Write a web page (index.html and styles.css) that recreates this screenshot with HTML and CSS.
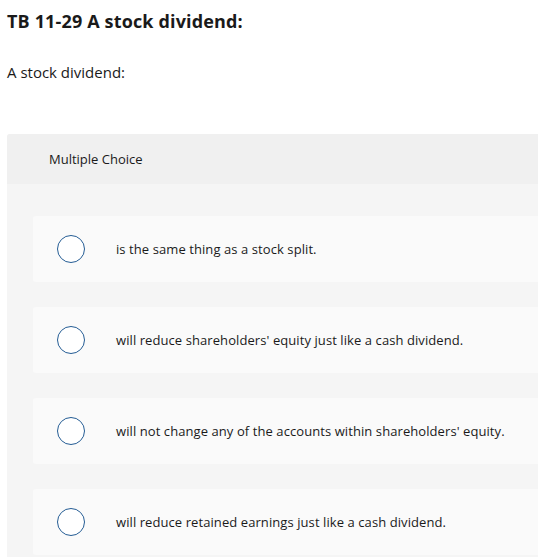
FILE: index.html
```html
<!DOCTYPE html>
<html>
<head>
<meta charset="utf-8">
<link rel="stylesheet" href="styles.css">
</head>
<body>
<div class="page">
  <h1 class="title">TB 11-29 A stock dividend:</h1>
  <p class="prompt">A stock dividend:</p>
  <div class="panel">
    <div class="panel-head">Multiple Choice</div>
    <div class="panel-body">
      <div class="option"><span class="radio"></span><span class="opt-text">is the same thing as a stock split.</span></div>
      <div class="option"><span class="radio"></span><span class="opt-text">will reduce shareholders' equity just like a cash dividend.</span></div>
      <div class="option"><span class="radio"></span><span class="opt-text">will not change any of the accounts within shareholders' equity.</span></div>
      <div class="option"><span class="radio"></span><span class="opt-text">will reduce retained earnings just like a cash dividend.</span></div>
    </div>
  </div>
</div>
</body>
</html>
```
FILE: styles.css
```css
html, body {
  margin: 0;
  padding: 0;
  background: #ffffff;
}
body {
  font-family: "Open Sans", "Noto Sans", sans-serif;
  color: #1a1a1a;
}
.page {
  padding-left: 7px;
}
.title {
  margin: 0;
  padding-top: 8px;
  font-size: 18px;
  line-height: 26px;
  font-weight: 700;
  letter-spacing: 0.15px;
  color: #1a1a1a;
}
.prompt {
  margin: 0;
  padding-top: 28px;
  font-size: 15px;
  line-height: 20px;
  color: #1a1a1a;
}
.panel {
  margin-top: 52px;
  border-radius: 3px 0 0 0;
  background: #f5f5f5;
}
.panel-head {
  height: 50px;
  display: flex;
  align-items: center;
  padding-left: 42px;
  background: #f0f0f0;
  border-radius: 3px 0 0 0;
  font-size: 13px;
  color: #1a1a1a;
}
.panel-body {
  padding: 32px 0 2px 26px;
  display: flex;
  flex-direction: column;
  gap: 25px;
}
.option {
  height: 66px;
  display: flex;
  align-items: center;
  background: #fafafa;
  border-radius: 3px 0 0 3px;
  padding-left: 24px;
}
.radio {
  box-sizing: border-box;
  width: 28px;
  height: 28px;
  border: 1.6px solid #245c94;
  border-radius: 50%;
  background: #ffffff;
  flex: none;
}
.opt-text {
  margin-left: 31px;
  font-size: 13px;
  letter-spacing: 0.08px;
  color: #1a1a1a;
}
```
